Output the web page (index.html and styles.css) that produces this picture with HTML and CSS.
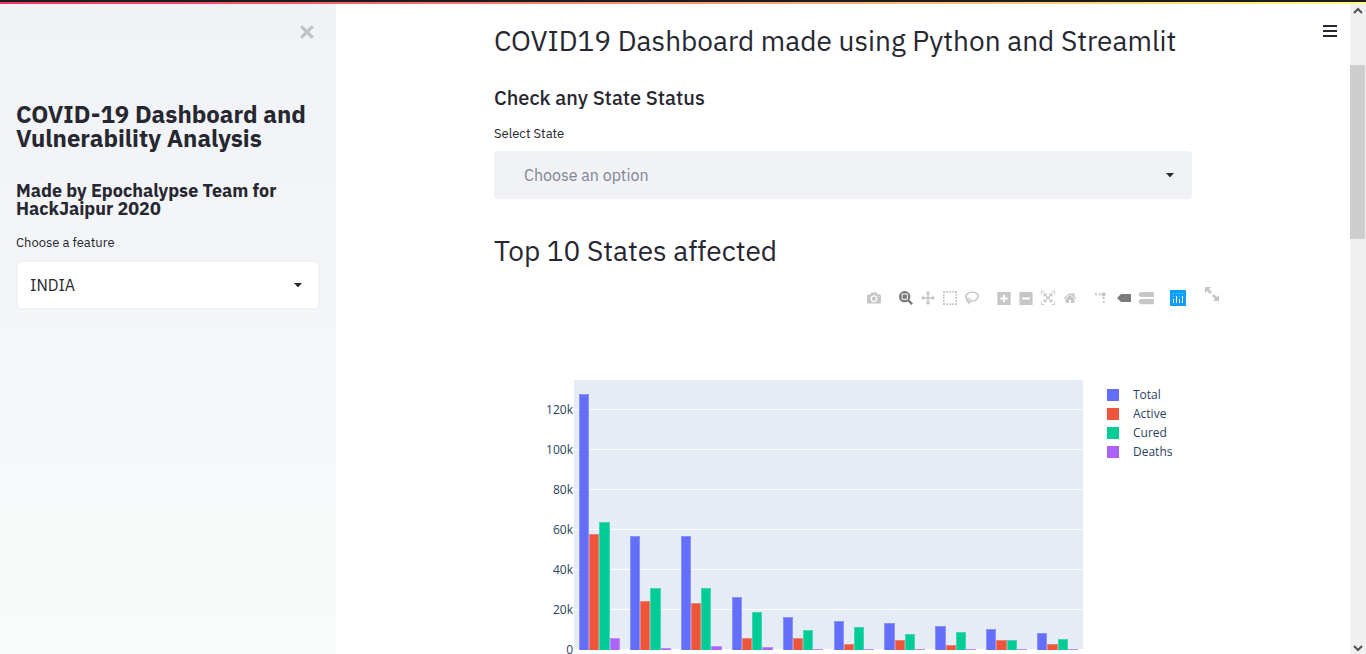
FILE: index.html
```html
<!DOCTYPE html>
<html lang="en">
<head>
<meta charset="utf-8">
<meta name="viewport" content="width=device-width, initial-scale=1">
<title>COVID19 Dashboard</title>
<link rel="stylesheet" href="styles.css">
</head>
<body>
<div class="decoration"></div>
<div class="shell">
  <aside class="sidebar">
    <button class="icon-button close" aria-label="Close sidebar">
      <svg width="16" height="16" viewBox="0 0 16 16"><path d="M3.4 3.4l9.2 9.2M12.6 3.4l-9.2 9.2" stroke="currentColor" stroke-width="3.2" stroke-linecap="square"/></svg>
    </button>
    <h1 class="side-title">COVID-19 Dashboard and Vulnerability Analysis</h1>
    <h2 class="side-subtitle">Made by Epochalypse Team for HackJaipur 2020</h2>
    <label class="field-label" for="feature">Choose a feature</label>
    <div class="select-wrap">
      <select class="select select-outlined" id="feature"><option>INDIA</option></select>
      <svg class="chevron" width="8" height="4" viewBox="0 0 8 4"><path d="M0 0h8L4.6 3.7q-.6.6-1.2 0z" fill="currentColor"/></svg>
    </div>
  </aside>

  <main class="main">
    <button class="icon-button menu" aria-label="Menu">
      <svg width="14" height="14" viewBox="0 0 14 14"><path d="M0 1h14v2H0zM0 6h14v2H0zM0 11h14v2H0z" fill="currentColor"/></svg>
    </button>
    <div class="block">
      <h2 class="heading">COVID19 Dashboard made using Python and Streamlit</h2>
      <h3 class="subheading">Check any State Status</h3>
      <label class="field-label" for="state">Select State</label>
      <div class="select-wrap">
        <select class="select select-filled" id="state"><option>Choose an option</option></select>
        <svg class="chevron chevron-inset" width="8" height="4" viewBox="0 0 8 4"><path d="M0 0h8L4.6 3.7q-.6.6-1.2 0z" fill="currentColor"/></svg>
      </div>
      <h2 class="heading heading-next">Top 10 States affected</h2>

      <section class="chart">
        <div class="modebar">
          <div class="tools">
            <button class="tool" aria-label="Download plot"><svg viewBox="0 0 1000 1000" width="14" height="14"><path transform="matrix(1 0 0 -1 0 850)" d="m500 450c-83 0-150-67-150-150 0-83 67-150 150-150 83 0 150 67 150 150 0 83-67 150-150 150z m400 150h-120c-16 0-34 13-39 29l-31 93c-6 15-23 28-40 28h-340c-16 0-34-13-39-28l-31-94c-6-15-23-28-40-28h-120c-55 0-100-45-100-100v-450c0-55 45-100 100-100h800c55 0 100 45 100 100v450c0 55-45 100-100 100z m-400-550c-138 0-250 112-250 250 0 138 112 250 250 250 138 0 250-112 250-250 0-138-112-250-250-250z m365 380c-19 0-35 16-35 35 0 19 16 35 35 35 19 0 35-16 35-35 0-19-16-35-35-35z"/></svg></button>
          </div>
          <div class="tools">
            <button class="tool active" aria-label="Zoom"><svg viewBox="0 0 1000 1000" width="14" height="14"><path transform="matrix(1 0 0 -1 0 850)" d="m1000-25l-250 251c40 63 63 138 63 218 0 224-182 406-407 406-224 0-406-182-406-406s183-406 407-406c80 0 155 22 218 62l250-250 125 125z m-812 250l0 438 437 0 0-438-437 0z m62 375l313 0 0-312-313 0 0 312z"/></svg></button>
            <button class="tool" aria-label="Pan"><svg viewBox="0 0 1000 1000" width="14" height="14"><path transform="matrix(1 0 0 -1 0 850)" d="m1000 350l-187 188 0-125-250 0 0 250 125 0-188 187-187-187 125 0 0-250-250 0 0 125-188-188 186-187 0 125 252 0 0-250-125 0 187-188 188 188-125 0 0 250 250 0 0-126 187 188z"/></svg></button>
            <button class="tool" aria-label="Box select"><svg viewBox="0 0 14 14" width="14" height="14"><path d="M0 0h2v2H0zM3 0h2v1.500H3zM6 0h2v1.500H6zM9 0h2v1.500H9zM12 0h2v2h-2zM0 3h1.500v2H0zM0 6h1.500v2H0zM0 9h1.500v2H0zM12.500 3h1.500v2h-1.500zM12.500 6h1.500v2h-1.500zM12.500 9h1.500v2h-1.500zM0 12h2v2H0zM3 12.500h2v1.500H3zM6 12.500h2v1.500H6zM9 12.500h2v1.500H9zM12 12h2v2h-2z"/></svg></button>
            <button class="tool" aria-label="Lasso select"><svg viewBox="0 0 1031 1000" width="14" height="14"><path transform="matrix(1 0 0 -1 0 850)" d="m1018 538c-36 207-290 336-568 286-277-48-473-256-436-463 10-57 36-108 76-151-13-66 11-137 68-183 34-28 75-41 114-42l-55-70 0 0c-2-1-3-2-4-3-10-14-8-34 5-45 14-11 34-8 45 4 1 1 2 3 2 5l0 0 113 140c16 11 31 24 45 40 4 3 6 7 8 11 48-3 100 0 151 9 278 48 473 255 436 462z m-624-379c-80 14-149 48-197 96 42 42 109 47 156 9 33-26 47-66 41-105z m-187-74c-19 16-33 37-39 60 50-32 109-55 174-68-42-25-95-24-135 8z m360 75c-34-7-69-9-102-8 8 62-16 128-68 170-73 59-175 54-244-5-9 20-16 40-20 61-28 159 121 317 333 354s407-60 434-217c28-159-121-318-333-355z"/></svg></button>
          </div>
          <div class="tools">
            <button class="tool" aria-label="Zoom in"><svg viewBox="0 0 875 1000" width="14" height="15"><path transform="matrix(1 0 0 -1 0 850)" d="m1 787l0-875 875 0 0 875-875 0z m687-500l-187 0 0-187-125 0 0 187-188 0 0 125 188 0 0 187 125 0 0-187 187 0 0-125z"/></svg></button>
            <button class="tool" aria-label="Zoom out"><svg viewBox="0 0 875 1000" width="14" height="15"><path transform="matrix(1 0 0 -1 0 850)" d="m0 788l0-876 875 0 0 876-875 0z m688-500l-500 0 0 125 500 0 0-125z"/></svg></button>
            <button class="tool" aria-label="Autoscale"><svg viewBox="0 0 1000 1000" width="14" height="14"><path transform="matrix(1 0 0 -1 0 850)" d="m250 850l-187 0-63 0 0-62 0-188 63 0 0 188 187 0 0 62z m688 0l-188 0 0-62 188 0 0-188 62 0 0 188 0 62-62 0z m-875-938l0 188-63 0 0-188 0-62 63 0 187 0 0 62-187 0z m875 188l0-188-188 0 0-62 188 0 62 0 0 62 0 188-62 0z m-125 188l-1 0-93-94-156 156 156 156 92-93 2 0 0 250-250 0 0-2 93-92-156-156-156 156 94 92 0 2-250 0 0-250 0 0 93 93 157-156-157-156-93 94 0 0 0-250 250 0 0 0-94 93 156 157 156-157-93-93 0 0 250 0 0 250z"/></svg></button>
            <button class="tool" aria-label="Reset axes"><svg viewBox="0 0 929 1000" width="14" height="14"><path transform="matrix(1 0 0 -1 0 850)" d="m786 296v-267q0-15-11-26t-25-10h-214v214h-143v-214h-214q-15 0-25 10t-11 26v267q0 1 0 2t0 2l321 264 321-264q1-1 1-4z m124 39l-34-41q-5-5-12-6h-2q-7 0-12 3l-386 322-386-322q-7-4-13-4-7 2-12 7l-35 41q-4 5-3 13t6 12l401 334q18 15 42 15t43-15l136-114v109q0 8 5 13t13 5h107q8 0 13-5t5-13v-227l122-102q5-5 6-12t-4-13z"/></svg></button>
          </div>
          <div class="tools">
            <button class="tool" aria-label="Toggle spike lines"><svg viewBox="0 0 1000 1000" width="14" height="14"><path transform="matrix(1.5 0 0 -1.5 0 850)" d="M512 409c0-57-46-104-103-104-57 0-104 47-104 104 0 57 47 103 104 103 57 0 103-46 103-103z m-327-39l92 0 0 92-92 0z m-185 0l92 0 0 92-92 0z m370-186l92 0 0 93-92 0z m0-184l92 0 0 92-92 0z"/></svg></button>
            <button class="tool active" aria-label="Show closest data on hover"><svg viewBox="0 0 14 14" width="14" height="14"><path d="M4 3h10v8H4L0 7z"/></svg></button>
            <button class="tool" aria-label="Compare data on hover"><svg viewBox="0 0 1125 1000" width="16" height="14"><path transform="matrix(1 0 0 -1 0 850)" d="m187 786l0 2-187-188 188-187 0 0 937 0 0 373-938 0z m0-499l0 1-187-188 188-188 0 0 937 0 0 376-938-1z"/></svg></button>
          </div>
          <a class="tool logo" href="#" aria-label="Produced with Plotly"><svg viewBox="0 0 16 16" width="16" height="16"><path fill="#119dff" d="M0 0h16v16H0z"/><path fill="#25fefd" d="M3 3h1v1H3zM6 3h1v1H6zM9 3h1v1H9zM12 3h1v1h-1zM3 6h1v1H3zM9 6h1v1H9z"/><path fill="#fff" d="M3 9h1v4H3zM6 6h1v7H6zM9 9h1v4H9zM12 6h1v7h-1z"/></svg></a>
        </div>
        <button class="icon-button expand" aria-label="View fullscreen">
          <svg width="16" height="16" viewBox="0 0 16 16" fill="currentColor"><path d="M1 1h6L5 3l3 3-2 2-3-3-2 2zM15 15H9l2-2-3-3 2-2 3 3 2-2z"/></svg>
        </button>
        <div class="plot-row">
          <div class="y-axis"></div>
          <div class="plot"></div>
          <ul class="legend">
            <li><span class="swatch total"></span>Total</li>
            <li><span class="swatch activecase"></span>Active</li>
            <li><span class="swatch cured"></span>Cured</li>
            <li><span class="swatch deaths"></span>Deaths</li>
          </ul>
        </div>
      </section>
    </div>
  </main>

  <div class="scrollbar" aria-hidden="true">
    <svg class="arrow" width="16" height="14" viewBox="0 0 16 14"><path d="M4 9l4-4 4 4" fill="none" stroke="currentColor" stroke-width="2"/></svg>
    <div class="track"><div class="thumb"></div></div>
    <svg class="arrow" width="16" height="14" viewBox="0 0 16 14"><path d="M4 6l4 4 4-4" fill="none" stroke="currentColor" stroke-width="2"/></svg>
  </div>
</div>
<script src="chart.js"></script>
</body>
</html>
```

FILE: styles.css
```css
* { box-sizing: border-box; }

body {
  margin: 0;
  height: 100vh;
  display: flex;
  flex-direction: column;
  overflow: hidden;
  color: #262730;
  background: #fff;
  font-family: "IBM Plex Sans", "Noto Sans", sans-serif;
  font-size: 16px;
}

h1, h2, h3, ul { margin: 0; padding: 0; }

.decoration {
  flex: none;
  height: 4px;
  border-top: 2px solid #1c1c1e;
  background: linear-gradient(90deg, #f63366, #fffd80) padding-box;
}

.shell { flex: 1; min-height: 0; display: flex; }

.icon-button {
  position: absolute;
  display: flex;
  padding: 0;
  border: 0;
  background: none;
  cursor: pointer;
}

.sidebar {
  position: relative;
  flex: none;
  width: 336px;
  padding: 98px 16px 0;
  background: linear-gradient(180deg, #f0f2f6, #f9fafa);
}
.close { top: 20px; right: 21px; color: #bfc1c6; }
.side-title { font-size: 24px; font-weight: 700; line-height: 24px; }
.side-subtitle { margin: 32px 0 15px; font-size: 18px; font-weight: 700; line-height: 18px; }

.field-label { display: block; margin-bottom: 7px; font-size: 13px; line-height: 20px; }

.select-wrap { position: relative; }
.select {
  display: block;
  width: 100%;
  height: 48px;
  border: 0;
  border-radius: 4px;
  appearance: none;
  font: inherit;
  color: inherit;
}
.select-outlined { height: 50px; padding: 0 12px; border: 2px solid #f0f2f6; background: #fff; }
.select-filled { padding: 0 30px; background: #f0f2f6; color: #808495; }
.chevron { position: absolute; top: 50%; right: 18px; margin-top: -2px; pointer-events: none; }

.main { position: relative; flex: 1; min-width: 0; padding: 21px 0 0; overflow: hidden; }
.menu { top: 20px; right: 13px; color: #262730; }
.block { max-width: 698px; margin: 0 auto; }
.heading { font-size: 28px; font-weight: 400; line-height: 32px; white-space: nowrap; }
.subheading { margin: 29px 0 14px; font-size: 20px; font-weight: 500; line-height: 24px; }
.heading-next { margin: 36px 0 13px; }

.chart {
  position: relative;
  height: 450px;
  padding-top: 10px;
  color: #2a3f5f;
  font-family: "Open Sans", sans-serif;
  font-size: 12px;
}
.modebar { display: flex; justify-content: flex-end; gap: 10px; height: 16px; padding-right: 3px; }
.tools { display: flex; }
.tool {
  display: flex;
  align-items: center;
  justify-content: center;
  width: 22px;
  height: 16px;
  padding: 0;
  border: 0;
  background: none;
  color: #c6c6c6;
  cursor: pointer;
}
.tool svg { fill: currentColor; }
.tool.active { color: #7b7b7b; }
.expand { top: 6px; right: -28px; color: #c4c5c9; }

.plot-row { display: flex; height: 270px; margin-top: 74px; }
.y-axis {
  flex: none;
  width: 80px;
  height: 100%;
  display: flex;
  flex-direction: column-reverse;
}
.tick {
  flex: none;
  height: calc(100% * 20 / 135);
  display: flex;
  align-items: flex-end;
  justify-content: flex-end;
  line-height: 8px;
  padding-right: 1px;
}
.tick span { margin-bottom: -4px; }
.plot {
  position: relative;
  flex: 1;
  display: grid;
  grid-template-columns: repeat(10, 1fr);
  background:
    linear-gradient(0deg, #fff 1px, transparent 1px) 0 100% / 100% calc(100% * 20 / 135) repeat-y #e5ecf6;
}
.group { display: flex; align-items: flex-end; padding: 0 10%; }
.bar { flex: 1; border: 1px solid rgba(229, 236, 246, 0.3); border-bottom: 0; min-height: 1px; }
.total { background-color: #636efa; }
.activecase { background-color: #ef553b; }
.cured { background-color: #00cc96; }
.deaths { background-color: #ab63fa; }

.legend { flex: none; width: 109px; padding: 5px 0 0 24px; list-style: none; }
.legend li { display: flex; align-items: center; gap: 14px; height: 19px; }
.swatch { width: 12px; height: 12px; }

.scrollbar {
  flex: none;
  width: 16px;
  display: flex;
  flex-direction: column;
  background: #f0f0f0;
  color: #505050;
}
.arrow { flex: none; }
.track { flex: 1; padding-right: 1px; display: grid; grid-template-rows: 47fr 174fr 401fr; }
.thumb { grid-row: 2; background: #cdcdcd; }
```

FILE: chart.js
```js
// Case counts in thousands: total, active, cured, deaths
const states = [
  [128.2, 58, 64.2, 5.9],
  [56.8, 24.7, 31.2, 0.8],
  [56.8, 23.3, 31.2, 2],
  [26.7, 6.2, 18.8, 1.5],
  [16.5, 5.9, 10, 0.5],
  [14.5, 2.9, 11.3, 0.2],
  [13.5, 5.1, 7.9, 0.5],
  [11.8, 2.3, 8.9, 0.5],
  [10.3, 4.9, 5.1, 0.1],
  [8.7, 3.2, 5.4, 0.1]
];
const axisMax = 135;
const series = ["total", "activecase", "cured", "deaths"];
const plot = document.querySelector(".plot");
for (const values of states) {
  const group = document.createElement("div");
  group.className = "group";
  values.forEach((value, i) => {
    const bar = document.createElement("div");
    bar.className = "bar " + series[i];
    bar.style.height = (value / axisMax * 100) + "%";
    group.append(bar);
  });
  plot.append(group);
}

const axis = document.querySelector(".y-axis");
for (let k = 0; k <= 120; k += 20) {
  const tick = document.createElement("div");
  tick.className = "tick";
  const label = document.createElement("span");
  label.textContent = k === 0 ? "0" : k + "k";
  tick.append(label);
  axis.append(tick);
}
```
